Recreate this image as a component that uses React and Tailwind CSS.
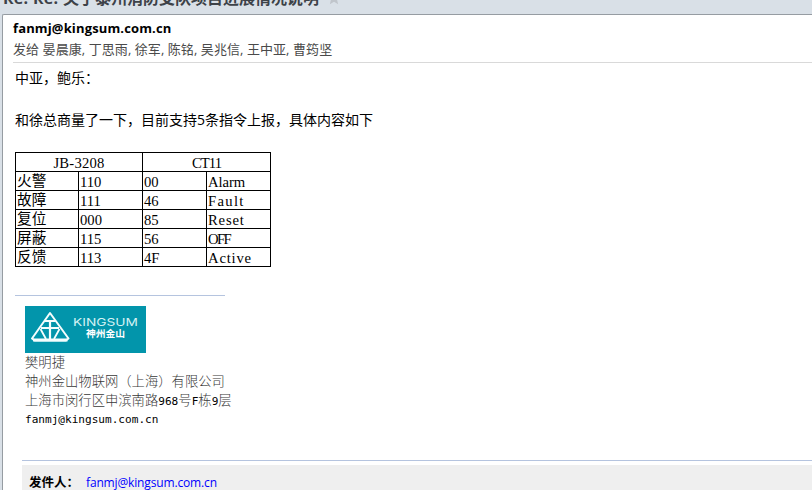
const ui = "font-['Open_Sans','Noto_Sans_CJK_SC',sans-serif]";
const serif = "font-['Liberation_Serif','Noto_Sans_CJK_SC',serif]";

const rows = [
  ['火警', '110', '00', 'Alarm', 'tracking-[-0.1px]'],
  ['故障', '111', '46', 'Fault', 'tracking-[1.3px]'],
  ['复位', '000', '85', 'Reset', 'tracking-[0.8px]'],
  ['屏蔽', '115', '56', 'OFF', 'tracking-[-1.6px]'],
  ['反馈', '113', '4F', 'Active', 'tracking-[0.8px]'],
];

function Logo() {
  return (
    <div className="mt-[10px] ml-[10px] h-[47px] w-[121px] bg-[#0295ab]">
      <svg width="121" height="47" viewBox="0 0 121 47" className="block">
        <g fill="none" stroke="#f4fdfd" strokeWidth="2" strokeLinejoin="round">
          <path d="M25 7 L7 32.5 L10 34.6 H40.5 L43.5 32.5 Z" />
          <path d="M8 34 H42.5" strokeWidth="3" />
          <path d="M19.5 15 H30.5 M16 22 H34 M25 14 V33" strokeWidth="2.2" />
          <path d="M15.5 23 L21 33 M34.5 23 L29 33" strokeWidth="1.8" />
        </g>
        <text x="48" y="20" fill="#d4f2f4" fontSize="10.5" textLength="65" lengthAdjust="spacingAndGlyphs" fontFamily="Inter, sans-serif">KINGSUM</text>
        <text x="61" y="31.2" fill="#ffffff" fontSize="9.5" fontWeight="700" textLength="39" lengthAdjust="spacingAndGlyphs" fontFamily="Noto Sans CJK SC, sans-serif">神州金山</text>
      </svg>
    </div>
  );
}

export default function App() {
  return (
    <div className={`flex h-[490px] w-[812px] flex-col overflow-hidden bg-[#d9e0e7] ${ui}`}>
      <header className="flex h-[14px] shrink-0 items-end overflow-hidden pl-[3px]">
        <div className="mb-[4px] flex h-6 shrink-0 items-center text-[16px] leading-6 font-bold whitespace-nowrap text-[#3d4248]">
          <span className="w-[60px] tracking-[0.3px]">Re: Re:</span>
          <span>关于泰州消防支队项目进展情况说明</span>
          <svg width="14" height="14" viewBox="0 0 24 24" className="ml-[8px]">
            <path d="M12 1l3.2 7.6 8.3.7-6.3 5.4 1.9 8.1-7.1-4.3-7.1 4.3 1.9-8.1L.5 9.3l8.3-.7z" fill="#c0c5cb" />
          </svg>
        </div>
      </header>
      <main className="ml-[2px] flex w-[812px] flex-1 flex-col overflow-hidden rounded-tl-[2px] border-t border-l border-[#969ca2] bg-white">
        <div className="ml-[10px] h-[48px] shrink-0 border-b border-[#d9d9d9] whitespace-nowrap">
          <div className="h-[24px] pt-[3px] text-[13px] leading-[20px] font-bold tracking-[0.14px] text-black">fanmj@kingsum.com.cn</div>
          <div className="text-[13px] leading-[20px] tracking-[0.07px] text-[#4a4a4a]">发给 晏晨康, 丁思雨, 徐军, 陈铭, 吴兆信, 王中亚, 曹筠坚</div>
        </div>
        <div className="ml-[12px] shrink-0 pt-[4px] text-[14px] leading-[21px] whitespace-nowrap text-black">
          <p>中亚，鲍乐：</p>
          <p className="mt-[21px]">和徐总商量了一下，目前支持5条指令上报，具体内容如下</p>
        </div>
        <table className={`mt-[22px] ml-[12px] w-[256px] shrink-0 table-fixed border-collapse text-[14.67px] leading-[18px] text-black ${serif}`}>
          <colgroup>
            <col className="w-[63px]" />
            <col className="w-[64px]" />
            <col className="w-[64px]" />
            <col className="w-[64px]" />
          </colgroup>
          <tbody>
            <tr className="h-[19px]">
              <td colSpan={2} className="border border-black p-0 text-center"><div className="h-[18px] pt-[1px] leading-[18px] tracking-[0.2px]">JB-3208</div></td>
              <td colSpan={2} className="border border-black p-0 text-center"><div className="h-[18px] pt-[1px] leading-[18px] tracking-[-0.9px]">CT11</div></td>
            </tr>
            {rows.map(([name, a, b, label, spacing]) => (
              <tr key={name} className="h-[19px]">
                <td className="border border-black p-0"><div className="h-[18px] pl-[1px] leading-[19px]">{name}</div></td>
                <td className="border border-black p-0"><div className="h-[18px] pt-[1px] pl-[1px] leading-[18px]">{a}</div></td>
                <td className="border border-black p-0"><div className="h-[18px] pt-[1px] pl-[1px] leading-[18px]">{b}</div></td>
                <td className="border border-black p-0"><div className={`h-[18px] pt-[1px] pl-[1px] leading-[18px] ${spacing}`}>{label}</div></td>
              </tr>
            ))}
          </tbody>
        </table>
        <section className="mt-[28px] ml-[12px] shrink-0">
          <div className="h-px w-[210px] bg-[#b5c4df]" />
          <Logo />
          <div className="ml-[10px] text-[13.33px] leading-[19px] whitespace-nowrap text-[#383838] font-['Noto_Sans_CJK_SC',sans-serif] font-light">
            <p className="-mt-px h-[19px]">樊明捷</p>
            <p className="h-[19px]">神州金山物联网（上海）有限公司</p>
            <p className="h-[19px]">上海市闵行区申滨南路<Mono>968</Mono>号<Mono>F</Mono>栋<Mono>9</Mono>层</p>
            <p className="flex h-[20px] items-center"><Mono>fanmj@kingsum.com.cn</Mono></p>
          </div>
        </section>
        <div className="mt-[31px] ml-[19px] h-px shrink-0 bg-[#b5c4df]" />
        <footer className="mt-[4px] ml-[19px] flex flex-1 bg-[#efefef] pt-[8px] pl-[7px] text-[12px] leading-[20px] whitespace-nowrap">
          <span className="w-[57px] text-[12.5px] font-bold text-black">发件人：</span>
          <span className="tracking-[-0.15px] text-[#0000ff]">fanmj@kingsum.com.cn</span>
        </footer>
      </main>
    </div>
  );
}

function Mono({ children }) {
  return <span className="font-['DejaVu_Sans_Mono',monospace] text-[11.08px] font-normal text-black">{children}</span>;
}
